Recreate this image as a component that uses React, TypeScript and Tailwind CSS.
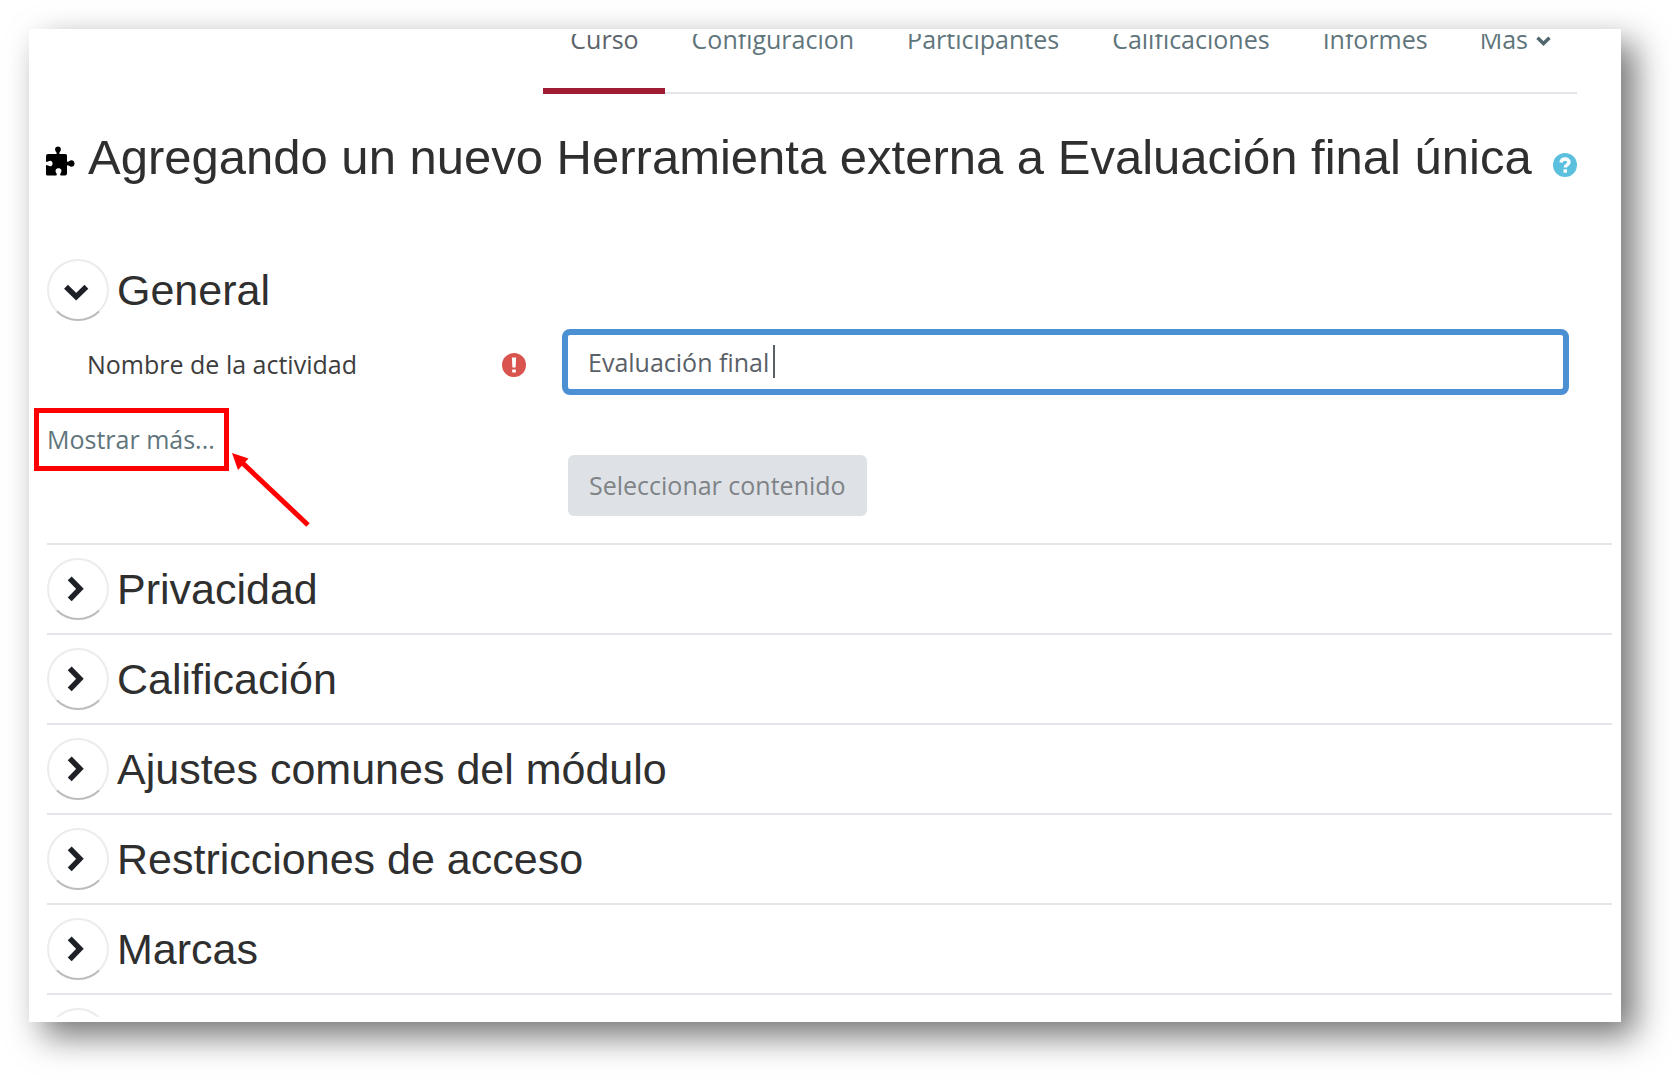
import { useState } from 'react';

const tabs = ['Curso', 'Configuración', 'Participantes', 'Calificaciones', 'Informes'];
const sections = ['Privacidad', 'Calificación', 'Ajustes comunes del módulo', 'Restricciones de acceso', 'Marcas'];

function PuzzleIcon() {
  return (
    <svg viewBox="0 0 30 32" className="w-[30px] h-8 mt-2 shrink-0" fill="#000" aria-hidden="true">
      <path d="M3 9H11.200C12 9 11.800 7.800 11 6.800C9.300 4.500 10.200 1.500 13 1.500S16.700 4.500 15 6.800C14.200 7.800 14 9 14.800 9H20.500Q22 9 22 10.500V16C22 17.200 23.200 17 24 16.200C26.200 14.200 29.500 15.300 29.500 18.500S26.200 22.800 24 20.800C23.200 20 22 19.800 22 21V28.500Q22 30.500 20 30.500H16C15 30.500 15 29.200 15.600 28.200C17.300 25.800 16.300 23.200 13.500 23.200S9.700 25.800 11.400 28.200C12 29.200 12 30.500 11 30.500H2.500Q1 30.500 1 29V20.800C1 19.800 2 20 3 20.600C5.200 22.200 7.600 21.200 7.600 18.500S5.200 14.800 3 16.400C2 17 1 17.200 1 16.200V11Q1 9 3 9Z" />
    </svg>
  );
}

function Chevron({ open = false }: { open?: boolean }) {
  return (
    <svg viewBox="0 0 26 26" className="w-[26px] h-[26px] overflow-visible" fill="none" stroke="#1d2125" strokeWidth="5.5" aria-hidden="true">
      {open ? <path d="M1 9.700L11.200 19.600L21.400 9.700" /> : <path d="M4.700 2.300L14.900 12.800L4.700 23.300" />}
    </svg>
  );
}

function ToggleButton({ label, open = false }: { label: string; open?: boolean }) {
  return (
    <button
      type="button"
      aria-label={label}
      aria-expanded={open}
      className="w-[62px] h-[62px] shrink-0 rounded-full border-2 border-[#ececec] border-b-[#bcbcbc] flex items-center justify-center"
    >
      <Chevron open={open} />
    </button>
  );
}

function SectionHeader({ title, open = false }: { title: string; open?: boolean }) {
  return (
    <div className="flex items-center gap-2">
      <ToggleButton label={title} open={open} />
      <h3 className="text-[43px] leading-[62px] text-[#2f2f2f]">{title}</h3>
    </div>
  );
}

export default function App() {
  const [name, setName] = useState('Evaluación final ');

  return (
    <div className="bg-white pt-[29px] pl-[29px] pr-[59px] pb-[59px] font-['Liberation_Sans',sans-serif]">
      <main className="bg-white py-[5px] shadow-[14px_14px_32px_rgba(0,0,0,0.55)]">
        {/* Course tabs, scrolled partly out of view */}
        <nav className="overflow-hidden pr-11 font-['Open_Sans',sans-serif] text-[25px] leading-[34px] text-[#5f757b]">
          <ul className="-mt-3 flex justify-end">
            {tabs.map((tab, i) => (
              <li key={tab}>
                <a
                  href="#"
                  className={
                    i === 0
                      ? 'block h-[72px] pl-[27px] pr-[26px] border-b-[6px] border-[#a01c32] text-[#5c636b]'
                      : 'block h-[72px] pl-[27px] pr-[26px] border-b-2 border-[#e2e6ea]'
                  }
                >
                  {tab}
                </a>
              </li>
            ))}
            <li>
              <a href="#" className="flex h-[72px] gap-2 px-[26px] border-b-2 border-[#e2e6ea]">
                Más
                <svg viewBox="0 0 15 10" className="mt-[14px] w-[15px] h-[10px]" fill="none" stroke="#4f676d" strokeWidth="3.5" aria-hidden="true">
                  <path d="M1.500 1.800L7.500 7.500L13.500 1.800" />
                </svg>
              </a>
            </li>
          </ul>
        </nav>

        <header className="mt-[33px] pl-4 pr-11 flex items-center justify-between">
          <div className="flex items-center gap-[13px]">
            <PuzzleIcon />
            <h2 className="text-[49px] leading-[60px] text-[#2f2f2f] whitespace-nowrap">
              Agregando un nuevo Herramienta externa a Evaluación final única
            </h2>
          </div>
          <button type="button" aria-label="Ayuda" className="mt-4">
            <svg viewBox="0 0 24 24" className="w-6 h-6" aria-hidden="true">
              <circle cx="12" cy="12" r="12" fill="#5bc0de" />
              <path d="M8 9.500C8.400 7 10 6 12.200 6C14.500 6 16 7.400 16 9.200C16 11.800 12.300 11.800 12.300 14.500" fill="none" stroke="#fff" strokeWidth="3.4" />
              <path d="M10.500 16.300H14V19.700H10.500Z" fill="#fff" />
            </svg>
          </button>
        </header>

        <form className="mt-[72px] pl-[18px] pr-[9px]" onSubmit={(e) => e.preventDefault()}>
          <section className="pb-[27px] border-b-2 border-[#e2e6ea]">
            <SectionHeader title="General" open />

            <div className="mt-2 flex items-center font-['Open_Sans',sans-serif] text-[25px]">
              <div className="w-[515px] shrink-0 pt-[6px] pl-10 pr-9 flex items-center justify-between text-[#3d3d3d]">
                <label htmlFor="activity-name">Nombre de la actividad</label>
                <svg viewBox="0 0 24 24" className="w-6 h-6" role="img" aria-label="Requerido">
                  <circle cx="12" cy="12" r="12" fill="#d9534f" />
                  <path d="M9.900 4.500H14.100L13.600 14.500H10.400ZM10.200 16.400H13.800V19.600H10.200Z" fill="#fff" />
                </svg>
              </div>
              <div className="relative flex-1 mr-[43px]">
                <input
                  id="activity-name"
                  type="text"
                  value={name}
                  onChange={(e) => setName(e.target.value)}
                  className="block w-full h-[66px] px-5 rounded-lg border-[6px] border-[#4a90d2] text-[#5a6068] outline-none"
                />
                {/* text cursor */}
                <span className="absolute left-[211px] top-4 w-[2px] h-[33px] bg-[#5a6068]" />
              </div>
            </div>

            <div className="mt-7 flex font-['Open_Sans',sans-serif] text-[25px] leading-8">
              <div className="relative">
                <a href="#" className="text-[#5f757b]">Mostrar más...</a>
                {/* Red callout and arrow over the link */}
                <div className="absolute -left-[13px] -top-[15px] w-[195px] h-[63px] border-[5px] border-[#ff0000] pointer-events-none" />
                <svg viewBox="0 0 80 76" className="absolute left-[184px] top-[29px] w-20 h-[76px] pointer-events-none" aria-hidden="true">
                  <path d="M10 9.500L77 73" stroke="#ff0000" strokeWidth="5" />
                  <path d="M1 1L17.500 6.500L7 18Z" fill="#ff0000" />
                </svg>
              </div>
            </div>

            <div className="pl-[521px]">
              <button
                type="button"
                disabled
                className="h-[61px] px-[21px] rounded-md bg-[#dee2e6] font-['Open_Sans',sans-serif] text-[25px] text-[#7f8386]"
              >
                Seleccionar contenido
              </button>
            </div>
          </section>

          {sections.map((title) => (
            <section key={title} className="py-[13px] border-b-2 border-[#e2e6ea]">
              <SectionHeader title={title} />
            </section>
          ))}

          {/* Next section, only its top edge is in view */}
          <section className="h-[22px] pt-[13px] overflow-hidden">
            <ToggleButton label="Expandir" />
          </section>
        </form>
      </main>
    </div>
  );
}
